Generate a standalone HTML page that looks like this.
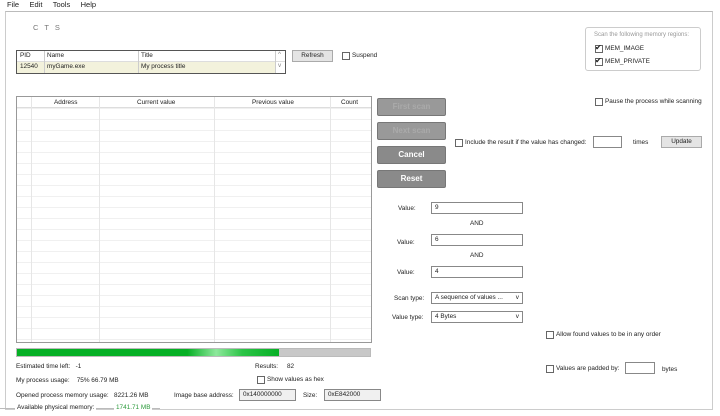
<!DOCTYPE html>
<html><head><style>
*{margin:0;padding:0;box-sizing:border-box}
body{width:720px;height:416px;background:#fff;font-family:"Liberation Sans",sans-serif;font-size:6.4px;color:#222;position:relative;overflow:hidden}
.a{position:absolute;white-space:nowrap}
.frame{position:absolute;left:5px;top:11px;width:708px;height:399px;border:1px solid #ccc;border-top-color:#bbb}
.btn{position:absolute;left:377px;width:69px;height:18px;background:#8a8a8a;border:1px solid #777;border-radius:2px;color:#fff;font-weight:bold;font-size:8px;text-align:center;line-height:16px}
.btn.dis{color:#aaa;background:#999}
.cb{position:absolute;width:8px;height:8px;border:1px solid #666;background:#fff}
.inp{position:absolute;height:12px;border:1px solid #888;background:#fff;padding-left:3px;line-height:10px;font-size:6.4px}
.gr{position:absolute;background:#e4e4e4;border:1px solid #aaa}
</style></head><body>
<div class="a" style="left:7px;top:0;font-size:7.5px;word-spacing:0">File&nbsp;&nbsp;&nbsp;&nbsp; Edit&nbsp;&nbsp;&nbsp;&nbsp; Tools&nbsp;&nbsp;&nbsp;&nbsp; Help</div>
<div class="frame"></div>
<div class="a" style="left:33px;top:23px;color:#777;letter-spacing:2px;font-size:7.5px">C T S</div>

<div class="a" style="left:16px;top:50px;width:270px;height:24px;border:1px solid #555;background:#fff">
 <div class="a" style="left:0;top:0;width:268px;height:11px;border-bottom:1px solid #ddd"></div>
 <div class="a" style="left:0;top:11px;width:258px;height:11px;background:#f3f2dc"></div>
 <div class="a" style="left:27px;top:0;width:1px;height:22px;background:#ccc"></div>
 <div class="a" style="left:121px;top:0;width:1px;height:22px;background:#ccc"></div>
 <div class="a" style="left:258px;top:0;width:1px;height:22px;background:#ccc"></div>
 <div class="a" style="left:3px;top:1px">PID</div><div class="a" style="left:30px;top:1px">Name</div><div class="a" style="left:124px;top:1px">Title</div>
 <div class="a" style="left:3px;top:12px">12540</div><div class="a" style="left:30px;top:12px">myGame.exe</div><div class="a" style="left:124px;top:12px">My process title</div>
 <div class="a" style="left:261px;top:0;color:#888">^</div><div class="a" style="left:261px;top:11px;color:#888">v</div>
</div>
<div class="gr" style="left:292px;top:50px;width:41px;height:12px;text-align:center;line-height:10px">Refresh</div>
<div class="cb" style="left:342px;top:52px"></div><div class="a" style="left:352px;top:52px">Suspend</div>

<div class="a" style="left:585px;top:27px;width:116px;height:44px;border:1px solid #ccc;border-radius:3px"></div>
<div class="a" style="left:594px;top:32px;color:#999;font-size:6px">Scan the following memory regions:</div>
<div class="cb" style="left:595px;top:45px"></div><div class="a" style="left:595px;top:43px;font-size:8px">✔</div><div class="a" style="left:605px;top:45px">MEM_IMAGE</div>
<div class="cb" style="left:595px;top:58px"></div><div class="a" style="left:595px;top:56px;font-size:8px">✔</div><div class="a" style="left:605px;top:58px">MEM_PRIVATE</div>

<div class="a" style="left:16px;top:96px;width:356px;height:247px;border:1px solid #999;background:#fff;overflow:hidden;
background-image:linear-gradient(#f0f0f0 1px,transparent 1px);background-size:100% 11px;background-position:0 11px">
 <div class="a" style="left:0;top:0;width:356px;height:11px;background:#fff;border-bottom:1px solid #ddd"></div>
 <div class="a" style="left:14px;top:0;width:1px;height:247px;background:#e6e6e6"></div>
 <div class="a" style="left:82px;top:0;width:1px;height:247px;background:#e6e6e6"></div>
 <div class="a" style="left:197px;top:0;width:1px;height:247px;background:#e6e6e6"></div>
 <div class="a" style="left:313px;top:0;width:1px;height:247px;background:#e6e6e6"></div>
 <div class="a" style="left:37px;top:2px">Address</div>
 <div class="a" style="left:120px;top:2px">Current value</div>
 <div class="a" style="left:235px;top:2px">Previous value</div>
 <div class="a" style="left:324px;top:2px">Count</div>
</div>

<div class="btn dis" style="top:98px">First scan</div>
<div class="btn dis" style="top:122px">Next scan</div>
<div class="btn" style="top:146px">Cancel</div>
<div class="btn" style="top:170px">Reset</div>

<div class="cb" style="left:595px;top:98px"></div><div class="a" style="left:605px;top:98px">Pause the process while scanning</div>
<div class="cb" style="left:455px;top:139px"></div><div class="a" style="left:465px;top:139px">Include the result if the value has changed:</div>
<div class="inp" style="left:593px;top:136px;width:29px;height:12px"></div>
<div class="a" style="left:633px;top:139px">times</div>
<div class="gr" style="left:661px;top:136px;width:41px;height:12px;text-align:center;line-height:10px">Update</div>

<div class="a" style="left:398px;top:205px">Value:</div><div class="inp" style="left:431px;top:202px;width:92px">9</div>
<div class="a" style="left:470px;top:220px">AND</div>
<div class="a" style="left:397px;top:239px">Value:</div><div class="inp" style="left:431px;top:234px;width:92px">6</div>
<div class="a" style="left:470px;top:252px">AND</div>
<div class="a" style="left:397px;top:269px">Value:</div><div class="inp" style="left:431px;top:266px;width:92px">4</div>
<div class="a" style="left:394px;top:295px">Scan type:</div><div class="inp" style="left:431px;top:292px;width:92px">A sequence of values ...<span style="position:absolute;right:3px">v</span></div>
<div class="a" style="left:392px;top:314px">Value type:</div><div class="inp" style="left:431px;top:311px;width:92px">4 Bytes<span style="position:absolute;right:3px">v</span></div>
<div class="cb" style="left:546px;top:331px"></div><div class="a" style="left:556px;top:331px">Allow found values to be in any order</div>
<div class="cb" style="left:546px;top:365px"></div><div class="a" style="left:556px;top:365px">Values are padded by:</div>
<div class="inp" style="left:625px;top:362px;width:30px"></div><div class="a" style="left:662px;top:366px">bytes</div>

<div class="a" style="left:16px;top:348px;width:355px;height:9px;background:#c8c8c8;border:1px solid #bbb">
 <div class="a" style="left:0;top:0;width:262px;height:7px;background:linear-gradient(90deg,#06b025 0,#06b025 65%,#8ee89c 76%,#2cc447 86%,#06b025 100%)"></div>
</div>
<div class="a" style="left:16px;top:363px">Estimated time left:&nbsp;&nbsp; -1</div>
<div class="a" style="left:255px;top:363px">Results:&nbsp;&nbsp;&nbsp;&nbsp; 82</div>
<div class="a" style="left:16px;top:377px">My process usage:&nbsp;&nbsp;&nbsp; 75% 66.79 MB</div>
<div class="cb" style="left:257px;top:376px"></div><div class="a" style="left:267px;top:376px">Show values as hex</div>
<div class="a" style="left:16px;top:392px">Opened process memory usage:&nbsp;&nbsp; 8221.26 MB</div>
<div class="a" style="left:174px;top:392px">Image base address:</div>
<div class="inp" style="left:239px;top:389px;width:57px;background:#f0f0f0">0x140000000</div>
<div class="a" style="left:303px;top:392px">Size:</div>
<div class="inp" style="left:324px;top:389px;width:57px;background:#f0f0f0">0xE842000</div>
<div class="a" style="left:0;top:408px;width:160px;height:1px;background:#bbb"></div>
<div class="a" style="left:15px;top:404px;background:#fff;padding:0 2px">Available physical memory:</div>
<div class="a" style="left:114px;top:404px;background:#fff;padding:0 2px;color:#2a9a3a">1741.71 MB</div>
</body></html>
